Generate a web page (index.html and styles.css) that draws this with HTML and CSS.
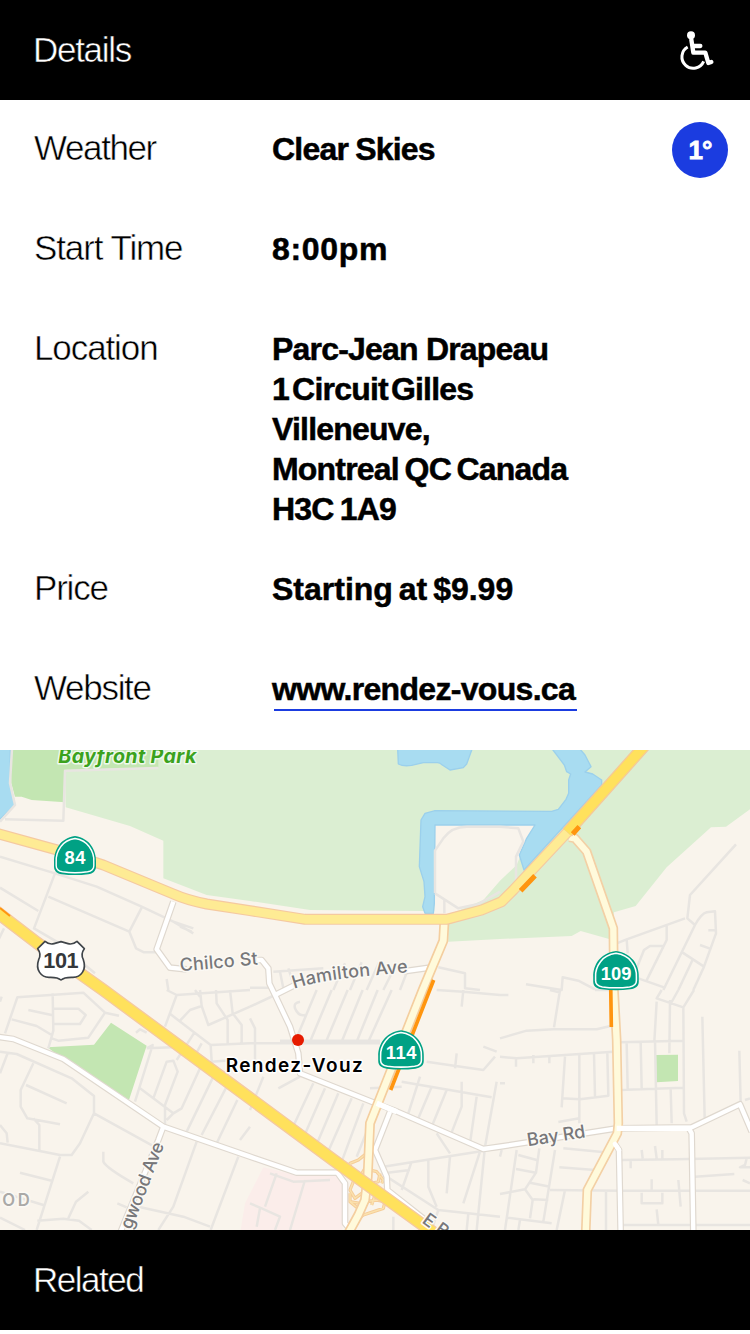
FILE: index.html
```
<!DOCTYPE html>
<html lang="en">
<head>
<meta charset="utf-8">
<title>Details</title>
<link rel="stylesheet" href="styles.css">
</head>
<body>
<main class="screen">
<header class="bar">
  <h1 class="bar-title details">Details</h1>
  <svg class="access" viewBox="0 0 102 120" role="img" aria-label="Wheelchair accessible">
    <circle cx="36" cy="13" r="12"/>
    <path class="body" d="M37 26 43 65H79L88 96 97 93M41 45H64"/>
    <path class="wheel" d="M26 48A34 34 0 1 0 74 91"/>
  </svg>
</header>
<dl class="info">
  <div class="row"><dt class="weather">Weather</dt><dd class="skies">Clear Skies</dd><dd class="temp">1°</dd></div>
  <div class="row"><dt class="start">Start Time</dt><dd class="time">8:00pm</dd></div>
  <div class="row row-tall"><dt class="location">Location</dt><dd><span class="a1">Parc-Jean Drapeau</span><br><span class="a2">1 Circuit Gilles</span><br><span class="a3">Villeneuve,</span><br><span class="a4">Montreal QC Canada</span><br><span class="a5">H3C 1A9</span></dd></div>
  <div class="row"><dt class="price">Price</dt><dd class="cost">Starting at $9.99</dd></div>
  <div class="row"><dt class="website">Website</dt><dd><a class="link" href="#">www.rendez-vous.ca</a></dd></div>
</dl>
<svg class="map" viewBox="0 0 2250 1440">
  <defs>
    <g id="shield">
      <path fill="#00a184" d="M0-66C24-63 42-51 51-39C62-25 68-6 67 10V24C67 38 57 45 42 47Q0 52-42 47C-57 45-67 38-67 24V10C-68-6-62-25-51-39C-42-51-24-63 0-66Z"/>
      <path fill="none" stroke="#fff" stroke-width="4.5" d="M0-59C21-56 37-46 45-35C55-22 61-5 60 10V22C60 33 53 38 40 40Q0 45-40 40C-53 38-60 33-60 22V10C-61-5-55-22-45-35C-37-46-21-56 0-59Z"/>
    </g>
    <path id="hamilton" d="M882 717Q930 700 1000 690T1240 666"/>
    <path id="r84" d="M-10 250 165 298 310 345 520 432Q560 450 620 462L750 482 915 508H1340L1445 480 1505 455 1540 420 1702 247"/>
    <path id="r101" d="M-20 478 110 578 310 720 750 1045 1000 1230 1310 1455"/>
    <path id="r101n" d="M1702 247 1940-20"/>
    <path id="r114" d="M1333 518 1330 572 1268 720 1110 1120 1103 1280 1095 1350 1075 1395 1045 1450"/>
    <path id="r109" d="M1708 262 1725 265 1760 305 1840 535 1842 720 1850 870 1855 1120 1852 1150 1762 1320 1757 1450"/>
    <g id="whites">
      <path d="M520 455 470 598 510 653 560 658M770 630H785L805 655 808 700 825 735 870 830 895 910 900 970 1140 1065 1180 1080 1450 1197 1500 1190 1850 1135 2075 1132 2220 1063 2255 1145"/>
      <path d="M825 735 885 705M1210 664 1290 653M-10 860 40 867 190 927 490 1130 750 1220 890 1268H1012L1035 1300V1420L1060 1450"/>
      <path d="M490 1130 475 1170 360 1450M1170 1085 1125 1200 1160 1280 1162 1320 1270 1405M1845 1182 1857 1200 1862 1450M2065 1132 2075 1150 2080 1450"/>
    </g>
  </defs>
  <rect width="2250" height="1440" fill="#f9f4ec"/>
  <path fill="#dbeed2" d="M475 0 195 60 197 172 390 228 490 272V385L620 435 750 453 930 480 1345 484V575L1500 567 1715 558 1742 543 1830 568 1842 487 1907 468 2000 352 2133 232 2178 230 2250 178V0Z"/>
  <path fill="#c3e6b2" d="M30 0 34 100 45 140H65L95 150 195 157V60L475 52V0ZM142 892 282 884 333 818 440 887 387 1050 190 927ZM1968 915 2034 914V993L1970 997Z"/>
  <path fill="#f9f4ec" d="M1305 225H1610L1560 320 1550 345 1500 392 1450 450 1380 480 1340 495H1303Z"/>
  <path fill="#fbedea" d="M790 1252 890 1275H1005L1027 1302V1440H722L735 1360Z"/>
  <g fill="#a8dcf1" stroke="#9bd0ec" stroke-width="4" stroke-linejoin="round">
    <path d="M-5-5H31L30 100 45 165-5 212Z"/>
    <path d="M1193-5 1195 42Q1210 50 1235 46L1270 38H1312Q1320 38 1327 45L1350 60 1390 53 1400 42 1417-5Z"/>
    <path d="M1655-5 1693 45 1700 65 1712 72 1706 90V130L1698 148 1675 178 1655 184 1305 182 1275 190 1263 210 1258 350 1272 395 1275 440 1268 470 1275 490H1300L1303 460 1305 225H1605L1580 265 1558 315 1572 360 1805 105V90L1778 72 1755 66 1773 50 1755 15 1738-5Z"/>
  </g>
  <g class="minor">
    <path d="M36-5 30 100 45 165 0 215M15 208 190 212 195 62 475 54M0 320 165 370 290 410 425 470 520 515 580 535M165 370 102 535 170 575 285 670M0 413 115 483M145 440 388 545 425 473M388 545 408 595 432 607H470M520 515 580 550M540 530 575 545M-5 570 12 535M500 687 505 720"/>
    <g transform="translate(750)">
      <path d="M555 430V302L580 265Q605 230 650 230H750L805 235 820 275 798 320V400M555 430 625 475 685 462 750 425M583 450V490M565 652 645 670V715L690 720M70 665 220 655M90 665 100 715M115 655 130 700M285 640 250 720M335 637 300 720M388 635 350 720M430 660 400 720M475 655 450 720M0 713H60"/>
    </g>
    <g transform="translate(1500)">
      <path d="M708 283 570 435 562 505 585 525M350 580 380 568 555 505M380 568 383 610M500 525V570L438 695M490 588H450L432 600 410 655M585 525 490 720M585 525Q605 490 620 487L645 484 648 550 612 650 580 720M625 541H648M600 585 628 595M548 608 612 650M580 625 535 720M415 685 492 712M78 703 185 720 188 682 235 692 285 718"/>
    </g>
    <g transform="translate(0 720)">
      <path d="M15 130 52 22 250 8 315 68 265 143 175 152 155 145M0 35 5 20M158 10 160 122 145 175M35 88 110 108 155 135M85 60 158 76M160 56H235L257 75 240 102H160M315 68 357 77M0 185 50 192 215 265 282 318V370L240 460 215 495H180L0 460M22 192 0 250M100 220 62 300V350L82 385 180 403M78 285 200 340M100 385 118 405V485M0 405 20 430 23 458M282 370 490 485M180 500 110 720M60 548 155 572M0 605 130 645M0 683 75 720M112 692 190 686 237 692 275 720M205 685 228 635 265 605M310 485V515Q320 535 400 580M352 640 380 652M415 650 550 680 630 710M590 455 520 650 475 720M715 500 632 720M405 335 458 165 440 175M408 128 420 118 440 128M440 175 555 170M460 325 500 215 520 212 533 245 495 345V410M420 295 520 370 500 390M520 370 545 355 600 235M640 260 560 425M685 280 605 435M712 330 650 460M750 410 720 450M495 110 530 15 500 0M508 70 580 125 632 165 750 160M540 92 570 60 605 48 600 0M605 48 625 105 750 50M600 20 585 0M648 0 650 40 683 90V160M690 0 698 70 725 105V160M530 15 750 0M632 165 635 215 700 210M585 125 530 210M605 160 580 205"/>
    </g>
    <g transform="translate(750 720)">
      <path d="M0 50 75 15M0 160H390M90 152H390M200 0 135 155M245 0 180 155M293 0 228 155M338 0 275 155M383 0 320 155M425 0 355 155M0 85 15 115V210M150 35Q130 38 135 55 145 80 165 75M640 0 635 50M560 0 640 5 750 15M530 215 700 240 735 200M620 190 615 235M700 170 740 185M455 275 725 322M360 295 455 290M85 295 150 260M190 280 120 430M225 295 155 455M265 310 195 475M305 325 230 495M340 340 275 515M380 350 320 500M40 260 0 360M510 260 475 370M545 290 505 385M590 300 545 410M635 275 635 350 600 440M680 320 660 460M740 275 705 470 680 720M400 530 560 505 750 475M560 430 600 490M535 510 535 590 560 650M485 515 455 600M600 500 590 610M690 485 640 640M400 550 480 540M410 560 565 660 750 680M565 660 545 720M430 680V720M655 670 650 720M80 550 45 650M165 570 120 720M0 640 35 655 90 680 75 720M30 655 20 710M60 550 130 575 240 570"/>
    </g>
    <g transform="translate(1500 720)">
      <path d="M0 15H25M180 0 162 112M0 145 80 122 160 118H290L335 107M150 0 180 8M285 0H330M0 200 50 205 340 185M48 205V230M100 195V220M148 200V220M195 200 185 352M238 190V400M282 190 285 320M322 190 325 317 240 328 185 325M175 396 238 385M360 157 548 152M380 160 383 297M422 155 425 297M465 152 470 405M510 30 508 190M550 50 552 370 560 395M470 35 463 155M485 0 470 25 550 52 582 0M535 0 510 45M360 300 548 293M512 298 515 400M607 80 614 385M718 182 722 340M735 330 750 325M0 280H15M50 480 15 720M0 612 75 598 98 630 90 685M55 495 110 510M48 537 108 548 118 475M108 548 75 598M90 578 150 590M100 628 145 630M165 480 130 695M20 683 155 700M60 690 55 720M195 600 170 720M190 475 315 487M178 532 285 540M150 600 365 602 750 602M318 605V720M365 510 530 508 750 503M392 510V535M425 480 428 505M465 468 470 505M487 480V505M585 560 703 552M455 568V602M535 570 542 650M425 608V640H487V608M470 658 475 705M370 705H750M740 505 735 525 720 532H750M728 570 750 580M5 480 0 500"/>
    </g>
  </g>
  <g class="ramps" transform="translate(750 720)"><path id="ramp" d="M350 490 325 510 300 520 305 550 330 560 345 535M360 500V540L380 545 400 570 395 580M310 575 300 600 315 625 335 610M365 580 385 575 390 550M300 610 300 635 330 660 340 675 400 655 405 635 380 630 350 635M360 605 375 615 365 645M330 640 300 635M340 675 320 690"/></g>
  <g class="ramps-fill" transform="translate(750 720)"><use href="#ramp"/></g>
  <g class="white-case"><use href="#whites"/></g>
  <g class="white-road"><use href="#whites"/></g>
  <g class="road">
    <use href="#r109" stroke="#f3d0a5" stroke-width="29"/><use href="#r109" stroke="#fffadb" stroke-width="19"/>
    <use href="#r114" stroke="#f4ce9f" stroke-width="30"/><use href="#r114" stroke="#fffadb" stroke-width="20"/>
    <use href="#r84" stroke="#f5c9a0" stroke-width="33"/><use href="#r84" stroke="#feeb94" stroke-width="26"/>
    <use href="#r101n" stroke="#f5c998" stroke-width="37"/><use href="#r101n" stroke="#ffe15c" stroke-width="29"/>
    <use href="#r101" stroke="#f5c9a0" stroke-width="39"/><use href="#r101" stroke="#ffe15c" stroke-width="31"/>
    <path d="M1850 1135H2075M1130 1060 1190 1085" stroke="#fff" stroke-width="16"/>
    <path d="M1845 1182 1857 1200" stroke="#fff" stroke-width="14" stroke-linecap="round"/>
  </g>
  <path class="traffic" d="M0 474 30 498" stroke-width="6"/>
  <path class="traffic" d="M1718 252 1738 230M1562 422 1605 377" stroke-width="15"/>
  <path class="traffic" d="M1301 690 1172 1020M1832 700 1834 831" stroke-width="11"/>

  <use href="#shield" transform="translate(225 325) scale(.94 1.01)"/>
  <use href="#shield" transform="translate(1848 670) scale(1.02)"/>
  <use href="#shield" transform="translate(1203 908) scale(1.02)"/>
  <path fill="#fff" stroke="#40454a" stroke-width="5" stroke-linejoin="round" d="M135 574Q148 585 162 581L183 575 204 581Q218 585 231 574L253 596Q241 612 250 629C261 660 242 682 219 682Q193 681 183 690Q173 681 147 682C124 682 105 660 116 629Q125 612 113 596Z"/>
  <g class="num">
    <text x="225" y="343" textLength="63">84</text>
    <text x="1848" y="689" textLength="92">109</text>
    <text x="1203" y="927" textLength="92">114</text>
    <text x="183" y="653" textLength="106" class="us">101</text>
  </g>
  <text class="park" x="175" y="38" textLength="414">Bayfront Park</text>
  <g class="street">
    <text transform="translate(541 664) rotate(-5)" textLength="234">Chilco St</text>
    <text textLength="347"><textPath href="#hamilton" textLength="347">Hamilton Ave</textPath></text>
    <text transform="translate(1584 1189) rotate(-9)" textLength="176">Bay Rd</text>
    <text transform="translate(394 1441) rotate(-69)" textLength="275">gwood Ave</text>
    <text transform="translate(1264 1417) rotate(36)">E B</text>
  </g>
  <text class="district" x="7" y="1367" textLength="82">OD</text>
  <text class="place" x="677" y="965" textLength="411">Rendez-Vouz</text>
  <circle cx="894" cy="870" r="18" fill="#e61b00"/>
</svg>
<footer class="bar"><h2 class="bar-title related">Related</h2></footer>
</main>
</body>
</html>
```
FILE: styles.css
```
body { margin: 0; background: #fff; font-family: "Liberation Sans", Arial, sans-serif; color: #000; }
.screen { width: 750px; }
.bar { box-sizing: border-box; height: 100px; padding: 0 37px 0 33px; background: #000; color: #fff; display: flex; align-items: center; justify-content: space-between; }
.bar-title { margin: 0; font-size: 35px; line-height: 40px; font-weight: 400; -webkit-text-stroke: .5px #000; }
.access { width: 34px; height: 40px; margin-top: 1px; overflow: visible; }
.access circle { fill: #fff; }
.body, .wheel { fill: none; stroke: #fff; stroke-linejoin: round; stroke-linecap: round; }
.body { stroke-width: 13; }
.wheel { stroke-width: 9; stroke-linecap: butt; }

.info { margin: 0; height: 650px; }
.row { box-sizing: border-box; height: 100px; padding: 29px 22px 0 34px; display: grid; grid-template-columns: 238px 1fr auto; align-items: start; line-height: 40px; }
.row-tall { height: 240px; }
dt { margin-top: -1px; font-size: 35px; white-space: nowrap; -webkit-text-stroke: .5px #fff; }
dd { margin: 0; font-size: 32px; font-weight: 700; white-space: nowrap; letter-spacing: -.8px; -webkit-text-stroke: .5px #000; }
.temp { width: 56px; height: 56px; margin-top: -7px; border-radius: 50%; background: #1b3ce0; color: #fff; font-size: 26px; line-height: 57px; text-align: center; letter-spacing: -1px; -webkit-text-stroke: .8px #fff; }
.link { display: inline-block; color: #000; text-decoration: none; background: linear-gradient(#1b3ce0, #1b3ce0) 2px 100% / 303px 2px no-repeat; height: 42px; width: 305px; letter-spacing: -.68px; }

.details { letter-spacing: -1.3px; }
.weather { letter-spacing: -1.4px; }
.start { letter-spacing: -1.1px; }
.location { letter-spacing: -1.1px; }
.price { letter-spacing: -1.2px; }
.website { letter-spacing: -1.3px; }
.related { letter-spacing: -1.5px; }
.skies { word-spacing: -1px; }
.time { letter-spacing: .7px; }
.a2 { word-spacing: -5px; }
.a4 { word-spacing: -2.5px; }
.a5 { word-spacing: -2px; }
.cost { letter-spacing: 0; word-spacing: -3px; }

.map { display: block; width: 750px; height: 480px; }
.minor { fill: none; stroke: #e8e5e1; stroke-width: 7.5; stroke-linejoin: round; }
.road, .white-case, .white-road, .ramps, .ramps-fill { fill: none; stroke-linejoin: round; }
.white-case { stroke: #dfd8cf; stroke-width: 20; }
.white-road { stroke: #fff; stroke-width: 13; }
.ramps { stroke: #f5cd98; stroke-width: 10; }
.ramps-fill { stroke: #fbe2ae; stroke-width: 4; }
.traffic { fill: none; stroke: #ff950f; }
.num { font-weight: 700; font-size: 55px; fill: #fff; text-anchor: middle; }
.us { fill: #35383b; font-size: 65px; }
.street, .district, .place, .park { font-family: Inter, sans-serif; paint-order: stroke; stroke: #fbf9f4; stroke-width: 9px; stroke-linejoin: round; }
.street { font-size: 54px; font-weight: 500; fill: #77777a; }
.district { font-size: 50px; font-weight: 600; fill: #aaa9a7; }
.place { font-size: 57px; font-weight: 600; fill: #000; stroke: #fff; }
.park { font-size: 59px; font-weight: 700; font-style: italic; fill: #3ba21d; stroke: #eff9ec; }
```
